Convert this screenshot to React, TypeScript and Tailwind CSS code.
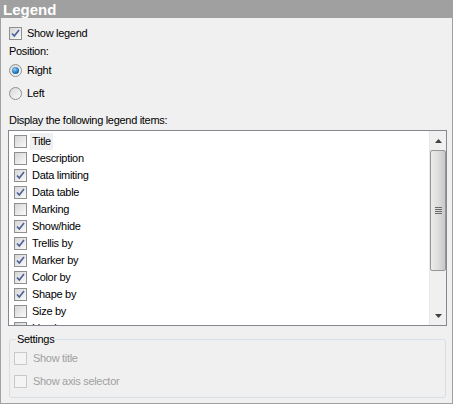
import React from "react";

function Check({ checked, disabled }: { checked?: boolean; disabled?: boolean }) {
  return (
    <div
      className={
        "w-[13px] h-[13px] shrink-0 border flex items-center justify-center " +
        (disabled
          ? "border-[#c9c9c9] bg-[#f4f4f4]"
          : "border-[#8e8f8f] bg-gradient-to-br from-[#d6d6d6] to-[#fbfbfb]")
      }
    >
      {checked && !disabled && (
        <svg width="9" height="9" viewBox="0 0 9 9">
          <path d="M1 4.5 L3.3 7 L8 1" fill="none" stroke="#4a5f97" strokeWidth="1.6" />
        </svg>
      )}
    </div>
  );
}

function Radio({ checked }: { checked?: boolean }) {
  return (
    <div className="w-[13px] h-[13px] shrink-0 rounded-full border border-[#8e8f8f] bg-gradient-to-br from-[#d8d8d8] to-[#fbfbfb] flex items-center justify-center">
      {checked && (
        <div className="w-[7px] h-[7px] rounded-full bg-[radial-gradient(circle_at_40%_35%,#8fd0ff,#1a6fb4_60%,#0d4a7f)]" />
      )}
    </div>
  );
}

const items: [string, boolean][] = [
  ["Title", false],
  ["Description", false],
  ["Data limiting", true],
  ["Data table", true],
  ["Marking", false],
  ["Show/hide", true],
  ["Trellis by", true],
  ["Marker by", true],
  ["Color by", true],
  ["Shape by", true],
  ["Size by", false],
  ["Line by", false],
];

export default function App() {
  return (
    <div
      className="w-[453px] h-[404px] bg-[#f0f0f0] border-x border-b border-[#a0a0a0] flex flex-col text-[11px] tracking-[-0.3px] text-black overflow-hidden"
      style={{ fontFamily: "'Liberation Sans', Arial, sans-serif" }}
    >
      <div className="h-[18px] shrink-0 bg-[#a0a0a0] pl-[2px] flex items-center text-white font-bold text-[15px] tracking-normal leading-none">
        Legend
      </div>
      <div className="flex flex-col pl-[7px] pr-[7px]">
        <div className="flex items-center gap-[5px] mt-[9px] h-[13px] pl-px">
          <Check checked />
          <span>Show legend</span>
        </div>
        <div className="mt-[5px] h-[13px] pl-px leading-[13px]">Position:</div>
        <div className="flex items-center gap-[5px] mt-[6px] h-[13px] pl-px">
          <Radio checked />
          <span>Right</span>
        </div>
        <div className="flex items-center gap-[5px] mt-[10px] h-[13px] pl-px">
          <Radio />
          <span>Left</span>
        </div>
        <div className="mt-[14px] h-[13px] pl-px leading-[13px]">Display the following legend items:</div>
        <div className="mt-[3px] h-[196px] w-[439px] shrink-0 border border-[#828790] bg-white flex overflow-hidden">
          <div className="flex-1 flex flex-col pt-[2px] overflow-hidden">
            {items.map(([label, c], i) => (
              <div key={label} className="h-[17px] shrink-0 flex items-center pl-[5px]">
                <Check checked={c} />
                <span
                  className={
                    "ml-[3px] px-[2px] h-[17px] leading-[17px] " + (i === 0 ? "bg-[#f0f0f0]" : "")
                  }
                >
                  {label}
                </span>
              </div>
            ))}
          </div>
          <div className="w-[17px] shrink-0 bg-[#f0f0f0] border-l border-[#e8e8e8] flex flex-col pt-px pb-px">
            <div className="h-[17px] shrink-0 flex items-center justify-center">
              <svg width="7" height="4" viewBox="0 0 7 4">
                <path d="M0 4 L3.5 0 L7 4 Z" fill="#404040" />
              </svg>
            </div>
            <div className="h-[121px] shrink-0 mt-px rounded-[2px] border border-[#979797] bg-gradient-to-r from-[#ececec] via-[#dedede] to-[#c8c8c8] flex items-center justify-center">
              <div className="flex flex-col gap-px">
                <div className="w-[7px] h-px bg-[#6a6a6a]" />
                <div className="w-[7px] h-px bg-[#6a6a6a]" />
                <div className="w-[7px] h-px bg-[#6a6a6a]" />
                <div className="w-[7px] h-px bg-[#6a6a6a]" />
              </div>
            </div>
            <div className="flex-1" />
            <div className="h-[17px] shrink-0 flex items-center justify-center">
              <svg width="7" height="4" viewBox="0 0 7 4">
                <path d="M0 0 L3.5 4 L7 0 Z" fill="#404040" />
              </svg>
            </div>
          </div>
        </div>
        <div className="relative mt-[13px] ml-px w-[437px] h-[59px] shrink-0 border border-[#d5dfe5] rounded-[3px]">
          <div className="absolute left-[6px] top-[-7px] px-px bg-[#f0f0f0] leading-[13px]">Settings</div>
          <div className="flex items-center gap-[6px] mt-[12px] ml-[4px] h-[13px] text-[#a0a0a0]">
            <Check disabled />
            <span>Show title</span>
          </div>
          <div className="flex items-center gap-[6px] mt-[10px] ml-[4px] h-[13px] text-[#a0a0a0]">
            <Check disabled />
            <span>Show axis selector</span>
          </div>
        </div>
      </div>
    </div>
  );
}
